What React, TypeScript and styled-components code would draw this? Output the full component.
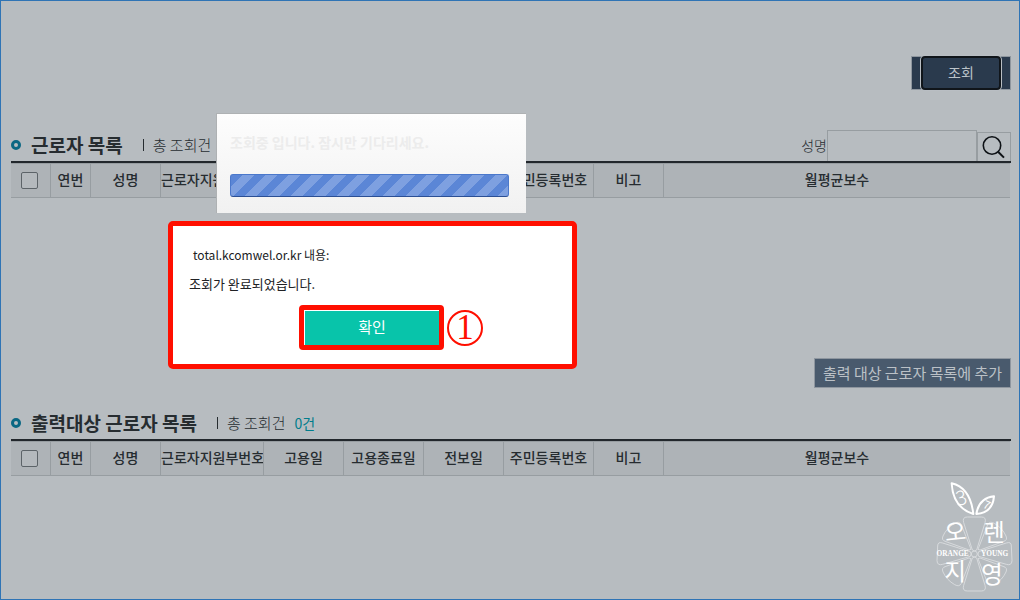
import React from "react";
import styled, { createGlobalStyle } from "styled-components";

const c = {
  page: "#b7bcc0",
  row: "#aeb3b7",
  line: "#979da1",
  ink: "#262c30",
  rule: "#22272c",
  navy: "#2a3a4d",
  slate: "#495a6d",
  teal: "#007d8c",
  red: "#ff0f00",
};

const Global = createGlobalStyle`
  *, *::before, *::after { box-sizing: border-box; }
  body { margin: 0; background: ${c.page}; }
  body, button, input {
    font-family: "Noto Sans CJK KR", "Noto Sans", sans-serif;
    color: ${c.ink};
  }
`;

const Page = styled.main`
  position: relative;
  min-height: 100vh;
  padding: 55px 8px 0 10px;
  border: 1px solid #2f74b5;
  background: ${c.page};
`;

const Actions = styled.div`
  display: flex;
  justify-content: flex-end;
`;

const QueryFrame = styled.div`
  display: flex;
  padding: 0 9px;
  border: 1px solid #8e969e;
  background: ${c.navy};
  height: 34px;
  align-items: center;
`;

const QueryButton = styled.button`
  width: 80px;
  height: 34px;
  padding: 0 0 2px;
  border: 2px solid #10151a;
  border-radius: 4px;
  box-shadow: 0 0 0 1px #b9bec3;
  background: ${c.navy};
  color: #bcc3c9;
  font-size: 14px;
  line-height: 20px;
`;

const AddButton = styled.button`
  height: 30px;
  padding: 0 8px;
  border: 1px solid #8e969f;
  background: ${c.slate};
  color: #bbc1c7;
  font-size: 15px;
  line-height: 20px;
`;

const Section = styled.section<{ $gap: number }>`
  margin-top: ${(p) => p.$gap}px;
`;

const SectionHead = styled.header`
  display: flex;
  align-items: center;
  justify-content: space-between;
  height: 31px;
`;

const Heading = styled.div`
  display: flex;
  align-items: center;
  padding-bottom: 2px;
`;

const Bullet = styled.span`
  width: 10px;
  height: 10px;
  margin-right: 10px;
  border: 3px solid #0a6783;
  border-radius: 50%;
`;

const Title = styled.h2`
  margin: 0;
  font-size: 19px;
  font-weight: 700;
  line-height: 28px;
`;

const Total = styled.p`
  display: flex;
  align-items: center;
  gap: 9px;
  margin: 0 0 0 20px;
  font-size: 15px;
  font-weight: 300;
  line-height: 20px;

  &::before {
    content: "";
    width: 1px;
    height: 12px;
    background: ${c.ink};
  }
`;

const Count = styled.span`
  color: ${c.teal};
  font-size: 14px;
  font-weight: 400;
`;

const SearchForm = styled.form`
  display: flex;
  align-items: flex-end;
  align-self: stretch;
`;

const SearchLabel = styled.label`
  align-self: center;
  padding-bottom: 2px;
  font-size: 14px;
  font-weight: 300;
  line-height: 20px;
`;

const SearchInput = styled.input`
  width: 150px;
  height: 31px;
  padding: 0 8px;
  border: 1px solid ${c.line};
  border-bottom: 0;
  background: transparent;
  font-size: 14px;
`;

const SearchButton = styled.button`
  display: grid;
  place-items: center;
  width: 34px;
  height: 29px;
  padding: 0;
  border: 1px solid ${c.line};
  border-bottom: 0;
  background: transparent;
`;

const TableFrame = styled.div`
  padding-right: 1px;
  border-top: 2px solid ${c.rule};
`;

const Table = styled.table`
  width: 100%;
  border-spacing: 0;
  table-layout: fixed;
`;

const HeadCell = styled.th<{ $width?: number }>`
  width: ${(p) => (p.$width ? `${p.$width}px` : "auto")};
  height: 35px;
  padding: 0 0 3px;
  overflow: hidden;
  border: 1px solid ${c.line};
  border-left: 0;
  background: ${c.row};
  font-size: 14px;
  font-weight: 500;
  line-height: 20px;
  white-space: nowrap;

  &:last-child {
    border-right: 0;
  }
`;

const CheckCell = styled(HeadCell)`
  padding: 0 2px 0 0;
`;

const Check = styled.input`
  appearance: none;
  display: block;
  width: 17px;
  height: 17px;
  margin: 0 auto;
  border: 1px solid #5c6368;
  border-radius: 2px;
  background: #b4b9bd;
`;

const ListArea = styled.div`
  height: 160px;
`;

const Loading = styled.div`
  position: absolute;
  top: 112px;
  left: 215px;
  width: 310px;
  height: 100px;
  padding: 17px 17px 0 13px;
  border: 1px solid #aeb1b3;
  border-width: 1px 0 0 1px;
  background: linear-gradient(#fdfdfd, #f1f1f1);
`;

const LoadingText = styled.p`
  margin: 0 0 21px;
  color: #ececec;
  font-size: 14px;
  font-weight: 700;
  line-height: 22px;
`;

const Progress = styled.div`
  height: 23px;
  border: 1px solid #4b78cb;
  border-bottom-color: #2b4f94;
  border-radius: 3px;
  background: linear-gradient(
      -45deg,
      #7ea0e0 25%,
      #5b86d6 25%,
      #5b86d6 50%,
      #7ea0e0 50%,
      #7ea0e0 75%,
      #5b86d6 75%
    )
    0 0 / 23px 23px;
`;

const Alert = styled.div`
  position: absolute;
  top: 220px;
  left: 167px;
  width: 409px;
  height: 148px;
  padding: 19px 16px 0;
  border: 5px solid ${c.red};
  border-radius: 5px;
  background: #fff;
  color: #202124;
  font-size: 13px;
  line-height: 20px;
`;

const AlertSite = styled.p`
  margin: 0 0 9px;
  padding-left: 4px;
  font-size: 12px;
`;

const AlertMessage = styled.p`
  margin: 0;
`;

const AlertActions = styled.div`
  display: flex;
  align-items: center;
  gap: 3px;
  margin: 11px 0 0 110px;
`;

const ConfirmFrame = styled.div`
  display: flex;
  padding: 1px 0 0 1px;
  border: 5px solid ${c.red};
  border-radius: 4px;
`;

const ConfirmButton = styled.button`
  width: 134px;
  height: 34px;
  padding: 0 0 2px;
  border: 0;
  background: #08c4aa;
  color: #fff;
  font-size: 15px;
  line-height: 20px;
`;

const Step = styled.span`
  display: grid;
  place-items: center;
  width: 36px;
  height: 36px;
  border: 2px solid ${c.red};
  border-radius: 50%;
  color: ${c.red};
  font-family: "Liberation Serif", serif;
  font-size: 35px;
  line-height: 32px;
`;

const Watermark = styled.svg`
  position: absolute;
  right: 6px;
  bottom: 7px;
  width: 77px;
  height: 110px;
`;

const columns: { label: string; width?: number }[] = [
  { label: "연번", width: 40 },
  { label: "성명", width: 70 },
  { label: "근로자지원부번호", width: 103 },
  { label: "고용일", width: 80 },
  { label: "고용종료일", width: 80 },
  { label: "전보일", width: 80 },
  { label: "주민등록번호", width: 90 },
  { label: "비고", width: 70 },
  { label: "월평균보수" },
];

function WorkerTable({ name }: { name: string }) {
  return (
    <TableFrame>
      <Table>
        <thead>
          <tr>
            <CheckCell $width={40}>
              <Check type="checkbox" aria-label={name} />
            </CheckCell>
            {columns.map((col) => (
              <HeadCell key={col.label} $width={col.width} scope="col">
                {col.label}
              </HeadCell>
            ))}
          </tr>
        </thead>
      </Table>
    </TableFrame>
  );
}

function SectionTitle({ title, count }: { title: string; count?: string }) {
  return (
    <Heading>
      <Bullet />
      <Title>{title}</Title>
      <Total>
        총 조회건 {count && <Count>{count}</Count>}
      </Total>
    </Heading>
  );
}

function OrangeLogo() {
  const long = "M157 238 L131 156 Q126 139 142 139 L184 139 Q200 139 195 156 L170 238 Q163 244 157 238 Z";
  const side = "M151 243 L68 217 Q53 212 53 226 L51 270 Q52 286 68 281 L151 257 Q155 250 151 243 Z";
  const diagonal = "M153 236 L124 162 Q118 150 104 158 Q80 172 69 196 Q63 209 78 213 L147 238 Z";
  return (
    <Watermark viewBox="48 34 231 330" aria-hidden="true">
      <g fill="none" stroke="#dde0e2" strokeWidth="2.5">
        <path d={long} />
        <path d={long} transform="matrix(1 0 0 -1 0 500)" />
        <path d={side} />
        <path d={side} transform="matrix(-1 0 0 1 327 0)" />
        <path d={diagonal} />
        <path d={diagonal} transform="matrix(-1 0 0 1 327 0)" />
        <path d={diagonal} transform="matrix(1 0 0 -1 0 500)" />
        <path d={diagonal} transform="matrix(-1 0 0 -1 327 500)" />
        <circle cx="163" cy="250" r="9" />
      </g>
      <g fill="none" stroke="#fff" strokeWidth="6" strokeLinejoin="round">
        <path d="M95 38 Q151 51 160 130 Q99 111 95 38 Z" />
        <path d="M222 77 Q177 82 169 130 Q218 126 222 77 Z" />
      </g>
      <g fill="#fff" fontFamily="'Noto Sans CJK KR', sans-serif" textAnchor="middle">
        <text x="124" y="103" fontSize="60" fontWeight="300" transform="rotate(-14 124 82)">3</text>
        <text x="200" y="115" fontSize="34" fontWeight="400" transform="rotate(25 200 104)">7</text>
        <g fontSize="70" fontWeight="400">
          <text x="106" y="209" transform="rotate(-6 106 185)">오</text>
          <text x="222" y="211">렌</text>
          <text x="106" y="329">지</text>
          <text x="216" y="338">영</text>
        </g>
        <g fontFamily="'Liberation Serif', serif" fontSize="22" fontWeight="700">
          <text x="98" y="257">ORANGE</text>
          <text x="224" y="257">YOUNG</text>
        </g>
      </g>
    </Watermark>
  );
}

export default function App() {
  return (
    <>
      <Global />
      <Page>
        <Actions>
          <QueryFrame>
            <QueryButton type="button">조회</QueryButton>
          </QueryFrame>
        </Actions>

        <Section $gap={40}>
          <SectionHead>
            <SectionTitle title="근로자 목록" />
            <SearchForm onSubmit={(e) => e.preventDefault()}>
              <SearchLabel htmlFor="worker-name">성명</SearchLabel>
              <SearchInput id="worker-name" type="text" />
              <SearchButton type="submit" aria-label="조회">
                <svg width="24" height="24" viewBox="0 0 24 24" fill="none" stroke="#0e1216" strokeWidth="1.6">
                  <circle cx="10" cy="10.5" r="8.7" />
                  <path d="M16.3 17 L22 22.6" strokeWidth="2" />
                </svg>
              </SearchButton>
            </SearchForm>
          </SectionHead>
          <WorkerTable name="근로자 목록" />
          <ListArea />
        </Section>

        <Actions>
          <AddButton type="button">출력 대상 근로자 목록에 추가</AddButton>
        </Actions>

        <Section $gap={20}>
          <SectionHead>
            <SectionTitle title="출력대상 근로자 목록" count="0건" />
          </SectionHead>
          <WorkerTable name="출력대상 근로자 목록" />
        </Section>

        <Loading role="status">
          <LoadingText>조회중 입니다. 잠시만 기다리세요.</LoadingText>
          <Progress />
        </Loading>

        <Alert role="alertdialog" aria-labelledby="alert-site" aria-describedby="alert-message">
          <AlertSite id="alert-site">total.kcomwel.or.kr 내용:</AlertSite>
          <AlertMessage id="alert-message">조회가 완료되었습니다.</AlertMessage>
          <AlertActions>
            <ConfirmFrame>
              <ConfirmButton type="button">확인</ConfirmButton>
            </ConfirmFrame>
            <Step>1</Step>
          </AlertActions>
        </Alert>

        <OrangeLogo />
      </Page>
    </>
  );
}
